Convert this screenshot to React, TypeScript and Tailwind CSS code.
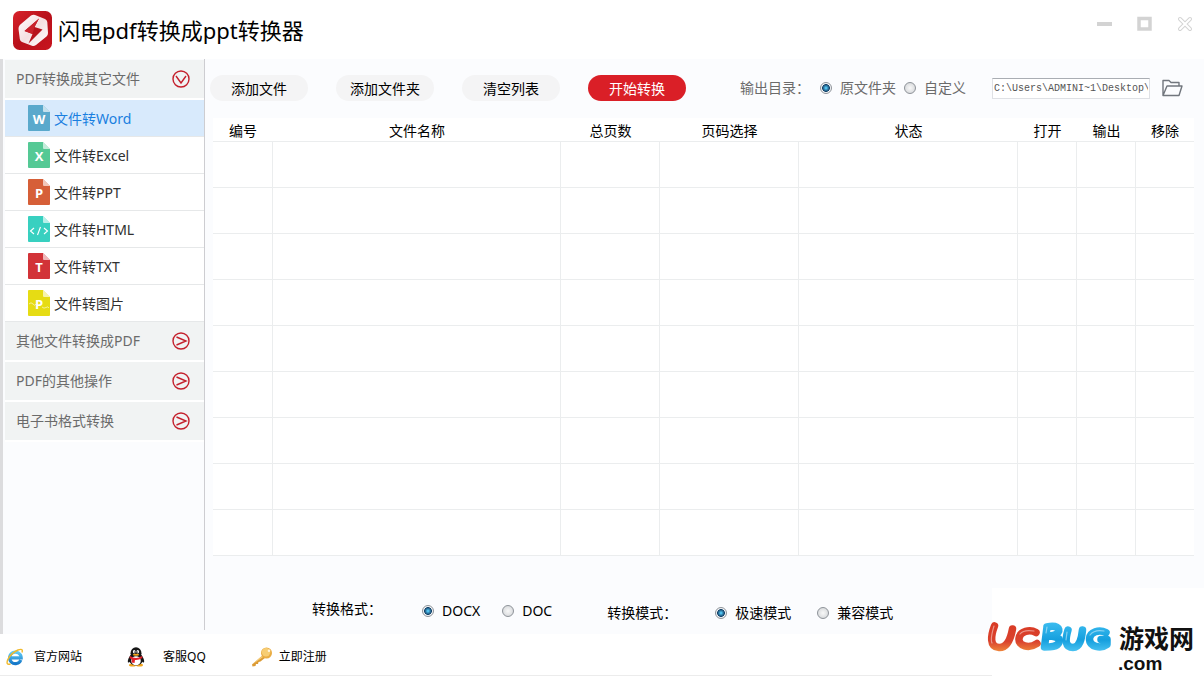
import React from "react";

const fileTypes = [
  { label: "文件转Word", color: "#5aa9cc", glyph: "W" },
  { label: "文件转Excel", color: "#55c995", glyph: "X" },
  { label: "文件转PPT", color: "#d65f38", glyph: "P" },
  { label: "文件转HTML", color: "#38d0c0", glyph: "</>" },
  { label: "文件转TXT", color: "#d23338", glyph: "T" },
  { label: "文件转图片", color: "#e6dc14", glyph: "P" },
];

const groups = ["其他文件转换成PDF", "PDF的其他操作", "电子书格式转换"];

const columns = [
  { label: "编号", width: "w-[60px]" },
  { label: "文件名称", width: "" },
  { label: "总页数", width: "w-[99px]" },
  { label: "页码选择", width: "w-[139px]" },
  { label: "状态", width: "w-[219px]" },
  { label: "打开", width: "w-[59px]" },
  { label: "输出", width: "w-[59px]" },
  { label: "移除", width: "w-[58px]" },
];

const rows = [1, 2, 3, 4, 5, 6, 7, 8, 9];

function AppLogo() {
  return (
    <svg className="size-10" viewBox="0 0 40 40" aria-hidden="true">
      <defs>
        <linearGradient id="logoRed" x1="0" y1="0" x2="1" y2="1">
          <stop offset="0" stopColor="#d8232b" />
          <stop offset="0.5" stopColor="#b8101a" />
          <stop offset="1" stopColor="#c8141e" />
        </linearGradient>
        <linearGradient id="logoWhite" x1="0" y1="0" x2="1" y2="1">
          <stop offset="0" stopColor="#fff" />
          <stop offset="0.5" stopColor="#f5dfe1" />
          <stop offset="1" stopColor="#fff" />
        </linearGradient>
      </defs>
      <rect x="0" y="1" width="39" height="39" rx="6.5" fill="url(#logoRed)" />
      <path d="M18 5.500Q20 4.500 22 5L32 9Q34 10 34.300 12L35 23Q35 25 33.500 26.500L23 35Q21 36.500 19 35.800L9 32Q7 31 6.800 29L5.500 19Q5.300 17 6.800 15Z" fill="url(#logoWhite)" />
      <path d="M26 8.500L11.500 21L19.500 24L15.500 33.500L29.500 19.500L21.500 17Z" fill="#b8121b" />
      <path d="M26 8.500L11.500 21L19.500 24L21.500 17Z" fill="#c9222c" />
    </svg>
  );
}

function FileIcon({ color, glyph }: { color: string; glyph: string }) {
  return (
    <svg className="h-[26px] w-[22px]" viewBox="0 0 22 26" aria-hidden="true">
      <path d="M1 0H15L22 7V25Q22 26 21 26H1Q0 26 0 25V1Q0 0 1 0Z" fill={color} />
      <path d="M15 0L22 7H16Q15 7 15 6Z" fill="#fff" fillOpacity="0.65" />
      {glyph === "</>" ? (
        <path d="M6 12L2.500 15L6 18M16 12L19.500 15L16 18M12.500 11L9.500 19" fill="none" stroke="#fff" strokeWidth="1.1" />
      ) : (
        <text x="11" y="19" textAnchor="middle" fontSize="13" fontWeight="700" fill="#fff" fontFamily="Open Sans, sans-serif">
          {glyph}
        </text>
      )}
      {color === "#e6dc14" && (
        <path d="M1 14Q3 11.500 5 14T8 14M14 17Q16 19 18 17.500T21 18" fill="none" stroke="#fff" strokeOpacity="0.7" strokeWidth="0.8" />
      )}
    </svg>
  );
}

function Arrow({ open = false }: { open?: boolean }) {
  return (
    <svg className="size-[18px]" viewBox="0 0 18 18" fill="none" stroke="#c4202c" strokeWidth="1.4" aria-hidden="true">
      <circle cx="9" cy="9" r="8" />
      {open ? <path d="M4 6L9 13L14 6" /> : <path d="M4.500 5L14 9L4.500 13" />}
    </svg>
  );
}

function GroupButton({ label, open = false }: { label: string; open?: boolean }) {
  return (
    <button type="button" aria-expanded={open} className="flex h-10 w-full items-center justify-between border-b-2 border-white bg-[#f1f3f3] pr-[14px] pl-[11px] text-[#6b6b6b]">
      <span>{label}</span>
      <Arrow open={open} />
    </button>
  );
}

function Radio({ name, label, checked = false }: { name: string; label: string; checked?: boolean }) {
  return (
    <label className="flex items-center gap-2">
      <input
        type="radio"
        name={name}
        defaultChecked={checked}
        className="size-3 appearance-none rounded-full border border-[#8e9399] bg-radial from-[#f8f8f8] to-[#cfd2d5] checked:from-[#4fc0ee] checked:from-10% checked:via-[#17456b] checked:via-50% checked:to-[#f2f4f6] checked:to-60%"
      />
      {label}
    </label>
  );
}

function FolderIcon() {
  return (
    <svg className="h-[18px] w-[21px]" viewBox="0 0 21 18" fill="none" stroke="#71767d" strokeWidth="1.4" strokeLinejoin="round" aria-hidden="true">
      <path d="M1 16.500V1.500H7L9 3.500H17V6.500M1 16.500L5 7H20L17 16.500Z" />
    </svg>
  );
}

function BrowserIcon() {
  return (
    <svg className="size-[18px]" viewBox="0 0 18 18" fill="none" aria-hidden="true">
      <defs>
        <linearGradient id="ieBlue" x1="0" y1="0" x2="0" y2="1">
          <stop offset="0" stopColor="#62cdf6" />
          <stop offset="1" stopColor="#1678c8" />
        </linearGradient>
      </defs>
      <path d="M14.800 12A5.800 5.800 0 1 1 15.200 9.800H5" stroke="url(#ieBlue)" strokeWidth="3.200" />
      <path d="M16 4.500Q17.500 0 12 2Q5 5 1.800 11.500Q-0.500 17.500 4.500 16" stroke="#f0b92c" strokeWidth="1.400" />
    </svg>
  );
}

function PenguinIcon() {
  return (
    <svg className="h-5 w-[18px]" viewBox="0 0 18 20" aria-hidden="true">
      <ellipse cx="5.500" cy="18" rx="3.500" ry="1.600" fill="#f2a51c" />
      <ellipse cx="12.500" cy="18" rx="3.500" ry="1.600" fill="#f2a51c" />
      <path d="M3.500 8Q0 13 1 15.500Q2 16 3.500 14L14.500 14Q16 16 17 15.500Q18 13 14.500 8Z" fill="#161616" />
      <ellipse cx="9" cy="6.200" rx="5.500" ry="6" fill="#161616" />
      <ellipse cx="9" cy="13.500" rx="6.500" ry="5" fill="#161616" />
      <ellipse cx="9" cy="13.800" rx="4.800" ry="4.500" fill="#fff" />
      <ellipse cx="7.200" cy="4.800" rx="1.300" ry="1.800" fill="#fff" />
      <ellipse cx="10.800" cy="4.800" rx="1.300" ry="1.800" fill="#fff" />
      <circle cx="7.500" cy="5" r="0.600" fill="#111" />
      <circle cx="10.500" cy="5" r="0.600" fill="#111" />
      <ellipse cx="9" cy="7.800" rx="3.200" ry="1" fill="#f5a81c" />
      <path d="M3 9Q9 13 15 9L15.500 11Q11 13.500 8 13L7.500 16L4.500 15.500L5 12.500L2.500 11Z" fill="#e3222b" />
    </svg>
  );
}

function KeyIcon() {
  return (
    <svg className="h-5 w-[22px]" viewBox="0 0 22 20" aria-hidden="true">
      <path d="M12 8L1 17.500L1.500 19.500L4.500 19L5 17L7 17L7.500 15L9.500 14.500L14.500 10.500Z" fill="#dc9b35" />
      <path d="M12 8L1 17.500L13 9.500Z" fill="#f6ce79" />
      <circle cx="15.500" cy="6" r="5.500" fill="#e9ac43" />
      <circle cx="15" cy="5.200" r="4.200" fill="#f7cd73" />
      <circle cx="18" cy="3.700" r="1.300" fill="#fff5de" />
    </svg>
  );
}

function SiteLogo() {
  return (
    <svg className="h-[56px] w-[212px]" viewBox="0 0 212 56" role="img" aria-label="UCBUG 游戏网 .com">
      <defs>
        <linearGradient id="wordRed" gradientUnits="userSpaceOnUse" x1="0" y1="2" x2="0" y2="32">
          <stop offset="0" stopColor="#d93a24" />
          <stop offset="0.65" stopColor="#da432e" />
          <stop offset="1" stopColor="#f08a3c" />
        </linearGradient>
        <linearGradient id="wordBlue" gradientUnits="userSpaceOnUse" x1="0" y1="2" x2="0" y2="32">
          <stop offset="0" stopColor="#3dbdf0" />
          <stop offset="0.6" stopColor="#159fde" />
          <stop offset="1" stopColor="#4cc4f2" />
        </linearGradient>
      </defs>
      <g fill="none" strokeLinecap="round" strokeLinejoin="round" strokeWidth="7.500">
        <path d="M50 12.500C44 9 34 11 33 18.500C32 26 43 29 51 23.500" stroke="url(#wordRed)" />
        <path d="M8.500 6C5 15 3 27 13 27.500C22 28 25 17 26.500 9" stroke="url(#wordRed)" />
        <path d="M61 7L58.500 27M61 7C70 5 75 8 72 12.500C70 15.500 65 16 60 16C70 16 75 18 73 22.500C71 27 65 27 58.500 27" stroke="url(#wordBlue)" />
        <path d="M82 10C79 20 79 27.500 87 27.500C94 27.500 95.500 19 96.500 10" stroke="url(#wordBlue)" />
        <path d="M120 12.500C113 9 104 12 103.500 18.500C103 27 115 29 121 24.500V19.500H115" stroke="url(#wordBlue)" />
      </g>
      <path d="M8 6C6 13 4 19 6 23M34 14C37 10 42 10 48 11M61 7L60 13M81 12L80 20M104 15C107 11 112 10 118 11" fill="none" stroke="#fff" strokeOpacity="0.45" strokeLinecap="round" strokeWidth="1.200" />
      <text x="133" y="28" fontSize="25" fontWeight="700" fill="#111" fontFamily="Liberation Sans, Noto Sans CJK SC, sans-serif">游戏网</text>
      <text x="132" y="50" fontSize="19" fontWeight="700" fill="#111" fontFamily="Liberation Sans, sans-serif">.com</text>
    </svg>
  );
}

const pill = "h-[26px] w-[98px] rounded-full bg-[#f4f4f5] pt-[2px] text-center";

export default function App() {
  return (
    <div className="relative flex min-h-screen flex-col bg-white font-['Noto_Sans','Noto_Sans_CJK_SC',sans-serif] text-sm leading-5 text-black">
      <header className="flex h-[59px] items-center pl-[13px]">
        <AppLogo />
        <h1 className="ml-[5px] text-[22px] leading-8">闪电pdf转换成ppt转换器</h1>
        <div className="mr-[11px] mb-3 ml-auto flex items-center gap-6 text-[#d3d3d3]">
          <button type="button" aria-label="最小化" className="flex size-4 items-center justify-center">
            <svg className="size-4" viewBox="0 0 16 16"><rect x="0" y="6" width="15" height="4" fill="currentColor" /></svg>
          </button>
          <button type="button" aria-label="最大化" className="flex size-4 items-center justify-center">
            <svg className="size-4" viewBox="0 0 16 16"><rect x="2" y="2.500" width="11" height="10.500" fill="none" stroke="currentColor" strokeWidth="3.500" /></svg>
          </button>
          <button type="button" aria-label="关闭" className="flex size-4 items-center justify-center">
            <svg className="size-4" viewBox="0 0 16 16" strokeLinecap="round"><path d="M3 3L13 13M13 3L3 13" stroke="currentColor" strokeWidth="4" /><path d="M3 3L13 13M13 3L3 13" stroke="#fff" strokeWidth="2" /></svg>
          </button>
        </div>
      </header>

      <div className="flex flex-1 border-l-[3px] border-[#dcdcde] bg-[#fbfcfe]">
        <aside className="mb-1 w-[202px] shrink-0 border-r border-[#cdcdd1] pt-px pl-[2px]">
          <GroupButton label="PDF转换成其它文件" open />
          <ul>
            {fileTypes.map((type, index) => (
              <li key={type.label} className="h-[37px] border-b border-[#e6e8e9] bg-white">
                <button
                  type="button"
                  className={
                    index === 0
                      ? "flex size-full items-center gap-1 bg-[#d8eafc] pl-[23px] text-[#1a7fe0]"
                      : "flex size-full items-center gap-1 pl-[23px] text-[#303030]"
                  }
                >
                  <FileIcon color={type.color} glyph={type.glyph} />
                  <span className="pt-px">{type.label}</span>
                </button>
              </li>
            ))}
          </ul>
          {groups.map((label) => (
            <GroupButton key={label} label={label} />
          ))}
        </aside>

        <main className="min-w-0 flex-1 pt-4">
          <div className="flex h-[26px] items-center pr-[21px] pl-[5px]">
            <div className="flex gap-7">
              <button type="button" className={pill}>添加文件</button>
              <button type="button" className={pill}>添加文件夹</button>
              <button type="button" className={pill}>清空列表</button>
              <button type="button" className="h-[26px] w-[98px] rounded-full bg-[#da1f27] pt-[2px] text-center text-white">开始转换</button>
            </div>
            <div className="ml-auto flex items-center text-[#6b6b6b]">
              <span className="mr-[10px]">输出目录：</span>
              <div className="flex gap-2">
                <Radio name="folder" label="原文件夹" checked />
                <Radio name="folder" label="自定义" />
              </div>
              <input
                type="text"
                aria-label="输出目录"
                defaultValue="C:\Users\ADMINI~1\Desktop\"
                className="mr-3 ml-[26px] h-[21px] w-[158px] border border-[#dfe1e5] border-t-[#a9adb3] bg-white px-px font-['Liberation_Mono',monospace] text-[10px] text-[#555]"
              />
              <button type="button" aria-label="浏览">
                <FolderIcon />
              </button>
            </div>
          </div>

          <div className="mt-[17px] mr-[10px] ml-2">
            <table className="w-full table-fixed border-separate border-spacing-0 bg-white">
              <thead>
                <tr className="h-6">
                  {columns.map((column) => (
                    <th key={column.label} scope="col" className={`${column.width} border-b border-[#ebedee] pt-[2px] text-center font-normal`}>
                      {column.label}
                    </th>
                  ))}
                </tr>
              </thead>
              <tbody>
                {rows.map((row) => (
                  <tr key={row} className="h-[46px]">
                    {columns.map((column) => (
                      <td key={column.label} className="border-r border-b border-[#ebedee] last:border-r-0" />
                    ))}
                  </tr>
                ))}
              </tbody>
            </table>
          </div>

          <div className="mt-[43px] flex items-start pl-[107px]">
            <div className="flex items-start">
              <span className="mr-10">转换格式：</span>
              <div className="flex gap-[22px] pt-[2px]">
                <Radio name="format" label="DOCX" checked />
                <Radio name="format" label="DOC" />
              </div>
            </div>
            <div className="ml-[55px] flex items-center pt-1">
              <span className="mr-[38px]">转换模式：</span>
              <div className="flex gap-[26px]">
                <Radio name="mode" label="极速模式" checked />
                <Radio name="mode" label="兼容模式" />
              </div>
            </div>
          </div>
        </main>
      </div>

      <footer className="flex h-[42px] items-center border-b border-[#ececec] pt-1 pl-[6px] text-xs">
        <a href="#site" className="flex items-center gap-[10px]">
          <BrowserIcon />
          官方网站
        </a>
        <a href="#support" className="ml-[45px] flex items-center gap-[18px]">
          <PenguinIcon />
          客服QQ
        </a>
        <a href="#register" className="ml-[45px] flex items-center gap-[6px]">
          <KeyIcon />
          立即注册
        </a>
      </footer>

      <div className="absolute right-0 bottom-0 flex h-[88px] w-[212px] items-end bg-white">
        <div className="-ml-[6px] shrink-0">
          <SiteLogo />
        </div>
      </div>
    </div>
  );
}
